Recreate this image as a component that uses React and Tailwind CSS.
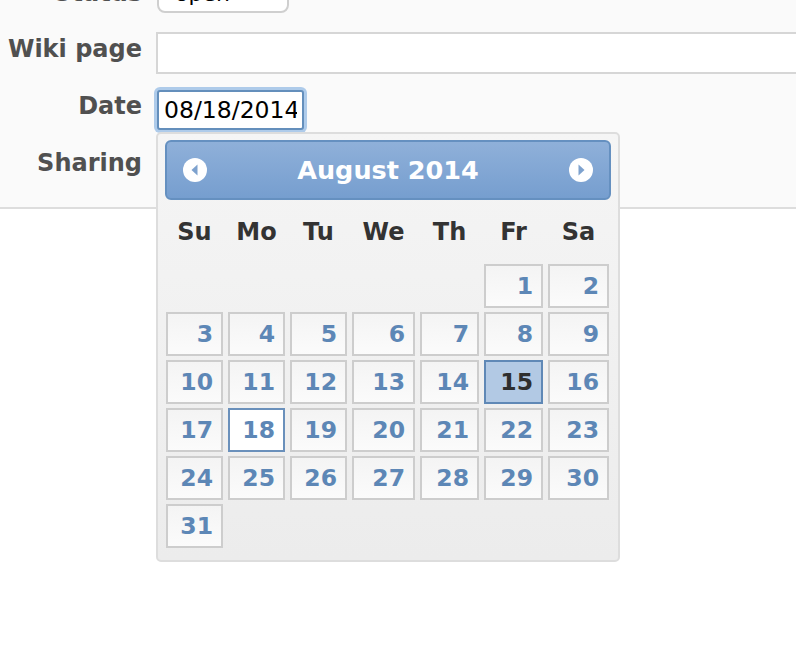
import React from 'react';

const font = { fontFamily: '"DejaVu Sans", Verdana, sans-serif' };

const dayNames = ['Su', 'Mo', 'Tu', 'We', 'Th', 'Fr', 'Sa'];

// August 2014 starts on a Friday
const cells = [...Array(5).fill(null), ...Array.from({ length: 31 }, (_, i) => i + 1)];

const CircleArrow = ({ dir }) => (
  <svg width="26" height="26" viewBox="0 0 26 26">
    <circle cx="13" cy="13" r="12" fill="#fff" />
    {dir === 'left' ? (
      <path d="M15.5 7.5 L9.5 13 L15.5 18.5 Z" fill="#7ea2ce" />
    ) : (
      <path d="M10.5 7.5 L16.5 13 L10.5 18.5 Z" fill="#7ea2ce" />
    )}
  </svg>
);

const DayCell = ({ day }) => {
  if (!day) return <div />;
  let cls = 'border-[#cdcdcd] bg-gradient-to-b from-[#f4f4f4] to-[#fbfbfb] text-[#5d87b6]';
  if (day === 15) cls = 'border-[#5f88b6] bg-[#b2c9e4] text-[#2e2e2e]';
  if (day === 18) cls = 'border-[#6a90bb] bg-white text-[#5d87b6]';
  return (
    <div className={`h-[44px] border-2 flex items-center justify-end pr-[8px] pt-[1px] text-[23.5px] font-bold ${cls}`}>
      {day}
    </div>
  );
};

export default function App() {
  return (
    <div className="relative w-[796px] h-[656px] overflow-hidden bg-white" style={font}>
      {/* form box */}
      <div className="bg-[#fafafa] border-b-2 border-[#dddddd] h-[237px] -mt-[28px] pt-[1px]">
        <div className="flex items-center h-[40px]">
          <div className="w-[142px] shrink-0 whitespace-nowrap text-right text-[24px] font-bold text-[#505050]">Status</div>
          <div className="ml-[15px] w-[132px] h-[40px] rounded-[8px] border-2 border-[#cfcfcf] bg-white flex items-center justify-between px-[16px] text-[22px] text-black">
            <span>open</span>
            <span className="text-[14px]">▼</span>
          </div>
        </div>
        <div className="flex items-center mt-[19px]">
          <div className="w-[142px] shrink-0 whitespace-nowrap text-right text-[24px] font-bold text-[#505050] leading-none pb-[8px]">Wiki page</div>
          <div className="ml-[14px] w-[700px] shrink-0 h-[42px] border-2 border-[#d6d6d6] bg-white" />
        </div>
        <div className="flex items-start mt-[16px]">
          <div className="w-[142px] shrink-0 whitespace-nowrap text-right text-[24px] font-bold text-[#505050] leading-none pt-[4px]">Date</div>
          <input
            readOnly
            value="08/18/2014"
            className="ml-[15px] w-[147px] h-[40px] border-2 border-[#648fbc] rounded-[3px] shadow-[0_0_0_3px_#aecbea] bg-white px-[5px] text-[23.5px] text-black outline-none"
            style={font}
          />
        </div>
        <div className="flex items-start mt-[21px]">
          <div className="w-[142px] shrink-0 whitespace-nowrap text-right text-[24px] font-bold text-[#505050] leading-none">Sharing</div>
        </div>
      </div>

      {/* datepicker popup */}
      <div className="absolute left-[156px] top-[132px] w-[464px] h-[430px] border-2 border-[#dddddd] rounded-[5px] bg-gradient-to-b from-[#f5f5f5] to-[#ececec] pt-[6px] px-[7px]">
        <div className="h-[60px] rounded-[6px] border-2 border-[#6590c0] bg-gradient-to-b from-[#8fb0d9] to-[#769ecf] flex items-center justify-between px-[15px]">
          <CircleArrow dir="left" />
          <span className="text-[25.5px] font-bold text-white">August 2014</span>
          <CircleArrow dir="right" />
        </div>
        <div className="grid grid-cols-[57px_57px_57px_63px_59px_59px_61px] gap-x-[5px] ml-[1px] h-[64px] items-center">
          {dayNames.map(d => (
            <div key={d} className="text-center text-[24px] font-bold text-[#333333] pb-[1px]">{d}</div>
          ))}
        </div>
        <div className="grid grid-cols-[57px_57px_57px_63px_59px_59px_61px] gap-x-[5px] gap-y-[4px] ml-[1px]">
          {cells.map((d, i) => (
            <DayCell key={i} day={d} />
          ))}
        </div>
      </div>
    </div>
  );
}
